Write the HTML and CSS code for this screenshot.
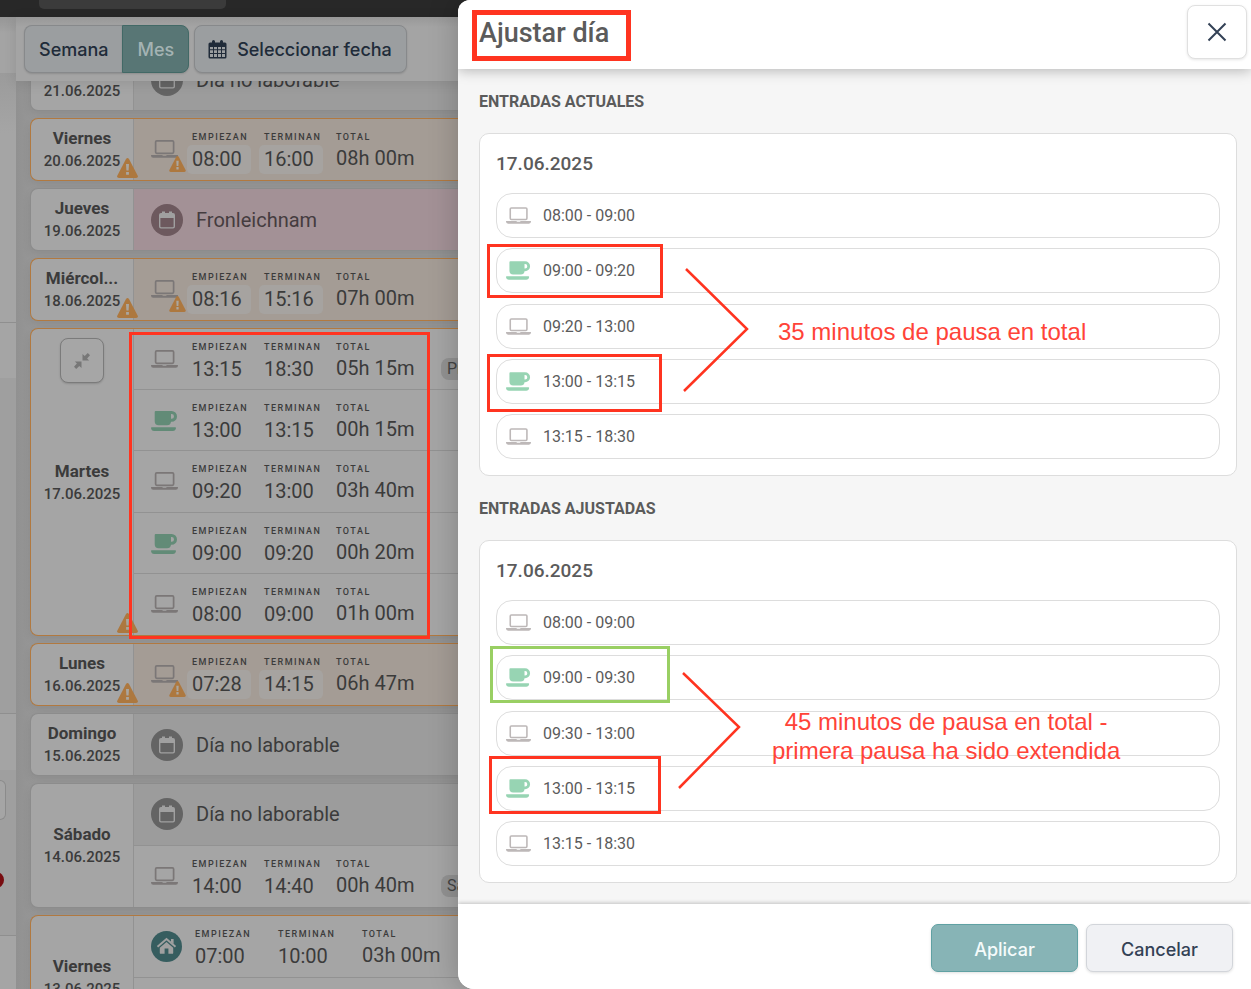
FILE: index.html
```html
<!DOCTYPE html>
<html lang="es">
<head>
<meta charset="utf-8">
<meta name="viewport" content="width=device-width, initial-scale=1">
<title>Ajustar día</title>
<link rel="stylesheet" href="styles.css">
</head>
<body>
<svg class="sprite" aria-hidden="true">
  <symbol id="laptop" viewBox="0 0 27 18"><rect x="4.6" y=".9" width="18" height="12.4" rx="1.2" fill="none" stroke="currentColor" stroke-width="1.7"/><path d="M0 14.9h11.2q.3.8 1 .8h2.6q.7 0 1-.8H27v.7q0 2.2-2.2 2.2H2.2Q0 17.800 0 15.600z" fill="currentColor"/></symbol>
  <symbol id="cup" viewBox="0 0 27 20"><path fill-rule="evenodd" d="M4.700 0H20.600a5.400 5.400 0 0 1 0 10.800H20a4 4 0 0 1-4 3.500H7.700a4 4 0 0 1-4-4V1q0-1 1-1zM20 3v4.800h.6a2.400 2.400 0 0 0 0-4.800zM.7 16.200h23.600q.8 0 .7.900-.4 2.900-3.200 2.900H3.200Q.4 20 0 17.100q-.1-.9.700-.9z" fill="currentColor"/></symbol>
  <symbol id="warn" viewBox="0 0 21 20"><path d="M9 1q1.500-2 3 0l8.600 16.400q1 2.300-1.500 2.500H1.900Q-.6 19.700.4 17.400z" fill="currentColor"/><path d="M9 6h3l-.4 6.500H9.400zM9.100 13.900h2.800v2.900H9.100z" class="warn-mark"/></symbol>
  <symbol id="day" viewBox="0 0 32 32"><circle cx="16" cy="16" r="16" fill="currentColor"/><path fill-rule="evenodd" d="M10 9h1V7.600h3V9h4V7.600h3V9h1q2 0 2 2v11.500q0 2-2 2H10q-2 0-2-2V11q0-2 2-2zm-.6 5v8.500q0 .7.700.7h11.800q.7 0 .7-.7V14z" class="day-mark"/></symbol>
  <symbol id="home" viewBox="0 0 31 31"><circle cx="15.500" cy="15.500" r="15.500" fill="currentColor"/><path d="M6.500 15.700l9-7.600 9 7.600" fill="none" class="home-line"/><path d="M20 8h2.600v5L20 11zM15.500 11l6.700 5.700v5.200q0 .9-.9.900h-3.900v-5.200h-3.800v5.200H9.700q-.9 0-.9-.9v-5.200z" class="day-mark"/></symbol>
</svg>

<div class="app">
  <header class="topbar"><div class="topbar-field"></div></header>
  <div class="workspace">
    <aside class="rail">
      <div class="rail-head"></div><div class="rail-a"></div><div class="rail-b"></div><div class="rail-c"></div><div class="rail-d"></div>
      <div class="rail-e"><i class="rail-field"></i><i class="rail-dot"></i></div>
      <div class="rail-f"></div>
    </aside>
    <main class="main">
      <div class="toolbar">
        <div class="segmented"><button type="button">Semana</button><button type="button" class="active">Mes</button></div>
        <button type="button" class="pick">
          <svg width="19" height="19" viewBox="0 0 19 19"><path fill-rule="evenodd" d="M2 2.500h2V1.500a1.500 1.500 0 0 1 3 0v1h5v-1a1.500 1.500 0 0 1 3 0v1h2q1.500 0 1.500 1.500v13q0 1.500-1.500 1.500H2Q.5 18.500.5 17V4Q.5 2.500 2 2.500zM2 7v2.200h3V7zm4 0v2.200h3V7zm4 0v2.200h3V7zm4 0v2.200h3V7zM2 10.200v2.800h3v-2.800zm4 0v2.800h3v-2.800zm4 0v2.800h3v-2.800zm4 0v2.800h3v-2.800zM2 14v3h3v-3zm4 0v3h3v-3zm4 0v3h3v-3zm4 0v3h3v-3z" fill="currentColor"/></svg>
          Seleccionar fecha</button>
      </div>
      <div class="scroller">
        <div class="days">
          <section class="day">
            <div class="date"><b>Sábado</b><span>21.06.2025</span></div>
            <div class="rows"><div class="row off"><svg class="round"><use href="#day"/></svg><span>Día no laborable</span></div></div>
          </section>
          <section class="day alert">
            <div class="date"><b>Viernes</b><span>20.06.2025</span><svg class="warn"><use href="#warn"/></svg></div>
            <div class="rows"><div class="row entry edit"><div class="kind"><svg class="laptop"><use href="#laptop"/></svg><svg class="mini"><use href="#warn"/></svg></div><div><small>EMPIEZAN</small><time>08:00</time></div><div><small>TERMINAN</small><time>16:00</time></div><div><small>TOTAL</small><span>08h 00m</span></div></div></div>
          </section>
          <section class="day">
            <div class="date"><b>Jueves</b><span>19.06.2025</span></div>
            <div class="rows"><div class="row off holiday"><svg class="round"><use href="#day"/></svg><span>Fronleichnam</span></div></div>
          </section>
          <section class="day alert">
            <div class="date"><b>Miércol...</b><span>18.06.2025</span><svg class="warn"><use href="#warn"/></svg></div>
            <div class="rows"><div class="row entry edit"><div class="kind"><svg class="laptop"><use href="#laptop"/></svg><svg class="mini"><use href="#warn"/></svg></div><div><small>EMPIEZAN</small><time>08:16</time></div><div><small>TERMINAN</small><time>15:16</time></div><div><small>TOTAL</small><span>07h 00m</span></div></div></div>
          </section>
          <section class="day alert">
            <div class="date"><button type="button" class="collapse" aria-label="Contraer"><svg width="16" height="16" viewBox="0 0 16 16"><path d="M8.500.9v6.600h6.600l-2-2L16 2.200 13.800 0l-3.100 3zM7.500 15.100V8.500H.9l2 2L0 13.800 2.200 16l3.100-3z" fill="currentColor"/></svg></button><b>Martes</b><span>17.06.2025</span><svg class="warn"><use href="#warn"/></svg></div>
            <div class="rows five">
              <div class="row entry"><div class="kind"><svg class="laptop"><use href="#laptop"/></svg></div><div><small>EMPIEZAN</small><time>13:15</time></div><div><small>TERMINAN</small><time>18:30</time></div><div><small>TOTAL</small><span>05h 15m</span></div><em>Proyecto</em></div>
              <div class="row entry"><div class="kind"><svg class="cup"><use href="#cup"/></svg></div><div><small>EMPIEZAN</small><time>13:00</time></div><div><small>TERMINAN</small><time>13:15</time></div><div><small>TOTAL</small><span>00h 15m</span></div></div>
              <div class="row entry"><div class="kind"><svg class="laptop"><use href="#laptop"/></svg></div><div><small>EMPIEZAN</small><time>09:20</time></div><div><small>TERMINAN</small><time>13:00</time></div><div><small>TOTAL</small><span>03h 40m</span></div></div>
              <div class="row entry"><div class="kind"><svg class="cup"><use href="#cup"/></svg></div><div><small>EMPIEZAN</small><time>09:00</time></div><div><small>TERMINAN</small><time>09:20</time></div><div><small>TOTAL</small><span>00h 20m</span></div></div>
              <div class="row entry"><div class="kind"><svg class="laptop"><use href="#laptop"/></svg></div><div><small>EMPIEZAN</small><time>08:00</time></div><div><small>TERMINAN</small><time>09:00</time></div><div><small>TOTAL</small><span>01h 00m</span></div></div>
            </div>
          </section>
          <section class="day alert">
            <div class="date"><b>Lunes</b><span>16.06.2025</span><svg class="warn"><use href="#warn"/></svg></div>
            <div class="rows"><div class="row entry edit"><div class="kind"><svg class="laptop"><use href="#laptop"/></svg><svg class="mini"><use href="#warn"/></svg></div><div><small>EMPIEZAN</small><time>07:28</time></div><div><small>TERMINAN</small><time>14:15</time></div><div><small>TOTAL</small><span>06h 47m</span></div></div></div>
          </section>
          <section class="day">
            <div class="date"><b>Domingo</b><span>15.06.2025</span></div>
            <div class="rows"><div class="row off"><svg class="round"><use href="#day"/></svg><span>Día no laborable</span></div></div>
          </section>
          <section class="day">
            <div class="date"><b>Sábado</b><span>14.06.2025</span></div>
            <div class="rows two">
              <div class="row off"><svg class="round"><use href="#day"/></svg><span>Día no laborable</span></div>
              <div class="row entry"><div class="kind"><svg class="laptop"><use href="#laptop"/></svg></div><div><small>EMPIEZAN</small><time>14:00</time></div><div><small>TERMINAN</small><time>14:40</time></div><div><small>TOTAL</small><span>00h 40m</span></div><em>Sábado</em></div>
            </div>
          </section>
          <section class="day alert">
            <div class="date"><b>Viernes</b><span>13.06.2025</span></div>
            <div class="rows two">
              <div class="row entry wide"><svg class="house"><use href="#home"/></svg><div><small>EMPIEZAN</small><time>07:00</time></div><div><small>TERMINAN</small><time>10:00</time></div><div><small>TOTAL</small><span>03h 00m</span></div></div>
              <div class="row"></div>
            </div>
          </section>
        </div>
      </div>
    </main>
  </div>
</div>

<div class="drawer" role="dialog" aria-labelledby="drawer-title">
  <header class="drawer-head">
    <h1 id="drawer-title">Ajustar día</h1>
    <button type="button" class="close" aria-label="Cerrar"><svg width="20" height="20" viewBox="0 0 20 20"><path d="M1.500 1.500l17 17M18.500 1.500l-17 17" stroke="currentColor" stroke-width="2"/></svg></button>
  </header>
  <div class="drawer-body">
    <h2>ENTRADAS ACTUALES</h2>
    <section class="panel">
      <h3>17.06.2025</h3>
      <ul>
        <li><svg class="laptop"><use href="#laptop"/></svg>08:00 - 09:00</li>
        <li><svg class="cup"><use href="#cup"/></svg>09:00 - 09:20</li>
        <li><svg class="laptop"><use href="#laptop"/></svg>09:20 - 13:00</li>
        <li><svg class="cup"><use href="#cup"/></svg>13:00 - 13:15</li>
        <li><svg class="laptop"><use href="#laptop"/></svg>13:15 - 18:30</li>
      </ul>
    </section>
    <h2>ENTRADAS AJUSTADAS</h2>
    <section class="panel">
      <h3>17.06.2025</h3>
      <ul>
        <li><svg class="laptop"><use href="#laptop"/></svg>08:00 - 09:00</li>
        <li><svg class="cup"><use href="#cup"/></svg>09:00 - 09:30</li>
        <li><svg class="laptop"><use href="#laptop"/></svg>09:30 - 13:00</li>
        <li><svg class="cup"><use href="#cup"/></svg>13:00 - 13:15</li>
        <li><svg class="laptop"><use href="#laptop"/></svg>13:15 - 18:30</li>
      </ul>
    </section>
  </div>
  <footer class="drawer-foot">
    <button type="button" class="apply">Aplicar</button>
    <button type="button" class="cancel">Cancelar</button>
  </footer>
</div>

<div class="notes">
  <svg class="marks" width="1251" height="989" viewBox="0 0 1251 989" fill="none" stroke="#ff3420" stroke-width="3" aria-hidden="true">
    <rect x="474.500" y="12.500" width="154" height="46" stroke-width="5"/>
    <rect x="130.500" y="333.500" width="298" height="304"/>
    <rect x="488.500" y="245.500" width="173" height="51"/>
    <rect x="488.500" y="355.500" width="172" height="55"/>
    <rect x="491.500" y="647.500" width="177" height="54" stroke="#99cf63"/>
    <rect x="490.500" y="757.500" width="169" height="55"/>
    <path d="M686 269l61 60-63 62M683 673l56 54-60 61" stroke-width="2.500"/>
  </svg>
  <p class="note first">35 minutos de pausa en total</p>
  <p class="note second">45 minutos de pausa en total -<br>primera pausa ha sido extendida</p>
</div>
</body>
</html>
```
FILE: styles.css
```css
* { box-sizing: border-box; }
body { margin: 0; height: 100vh; overflow: hidden; position: relative; font-family: Roboto, "Liberation Sans", sans-serif; color: #3b3b3b; background: #979797; }
button { font: 500 18px/24px Inter, "Liberation Sans", sans-serif; margin: 0; padding: 0; }
svg { flex: none; display: block; }
.sprite { position: absolute; width: 0; height: 0; }

.app { height: 100vh; display: flex; flex-direction: column; }
.topbar { flex: none; height: 17px; background: #282828; padding-left: 39px; }
.topbar-field { width: 187px; height: 9px; background: #3b3b3b; border-radius: 0 0 5px 5px; }
.workspace { flex: 1; min-height: 0; display: flex; }

.rail { width: 16px; flex: none; display: flex; flex-direction: column; background: #9f9f9f; }
.rail-head { height: 56px; background: linear-gradient(#969696, #a4a4a4 16px); }
.rail-a { height: 250px; background: linear-gradient(#9b9b9b, #a5a5a5 60px); border-bottom: 1px solid #8f8f8f; }
.rail-b { height: 55px; background: #a5a5a5; }
.rail-c { height: 336px; background: #9f9f9f; border-bottom: 1px solid #8f8f8f; }
.rail-d { height: 56px; background: #a4a4a4; }
.rail-e { height: 166px; border-bottom: 1px solid #8f8f8f; padding-top: 10px; overflow: hidden; }
.rail-field { display: block; width: 6px; height: 40px; border: 1px solid #8b8b8b; border-left: 0; border-radius: 0 6px 6px 0; background: #a5a5a5; }
.rail-dot { display: block; width: 16px; height: 16px; margin: 52px 0 0 -12px; border-radius: 50%; background: #780c10; }
.rail-f { flex: 1; background: #a5a5a5; }

.main { flex: 1; min-width: 0; display: flex; flex-direction: column; }
.toolbar { flex: none; height: 64px; padding: 8px; display: flex; gap: 5px; background: linear-gradient(#989898, #a4a4a4 10px); position: relative; z-index: 1; box-shadow: 0 2px 12px rgba(0,0,0,.1); }
.segmented { display: flex; }
.toolbar button { height: 48px; padding: 2px 14px 0; color: #202b39; background: #9b9ea0; border: 1px solid #87898b; border-radius: 8px; box-shadow: 0 1px 2px rgba(0,0,0,.14); }
.segmented button:first-child { border-radius: 8px 0 0 8px; border-right: 0; }
.toolbar .active { color: #a4b3b3; background: #587675; border-color: #426966; border-radius: 0 8px 8px 0; }
.toolbar .pick { display: flex; align-items: center; gap: 10px; padding: 2px 14px 0 13px; }
.pick svg { margin-bottom: 2px; }

.scroller { flex: 1; min-height: 0; overflow: hidden; padding-left: 14px; background: linear-gradient(90deg, #919191, #989898 20px); }
.days { margin-top: -33px; display: flex; flex-direction: column; gap: 7px; }
.day { display: flex; border: 1px solid #8c8c8c; border-right: 0; border-radius: 8px 0 0 8px; background: #a5a5a5; box-shadow: 0 4px 9px rgba(0,0,0,.08); }
.day.alert { border-color: #b17940; }
.date { width: 103px; flex: none; border-right: 1px solid #929292; position: relative; display: flex; flex-direction: column; align-items: center; justify-content: center; padding-top: 2px; }
.date b { font-size: 17px; line-height: 22px; font-weight: 700; }
.date span { font-size: 15px; line-height: 25px; font-weight: 500; }
.warn { position: absolute; right: -5px; bottom: 2px; width: 21px; height: 20px; color: #ad783f; z-index: 1; }
.warn-mark { fill: #aaa69f; }
.collapse { position: absolute; top: 9px; left: 29px; width: 44px; height: 45px; display: flex; align-items: center; justify-content: center; background: #a6a6a6; border: 1px solid #7b7b7b; border-radius: 8px; color: #777; box-shadow: 0 1px 2px rgba(0,0,0,.15); }
.rows { flex: 1; min-width: 0; min-height: 61px; display: grid; grid-auto-rows: 1fr; }
.rows.two { min-height: 123px; }
.rows.five { min-height: 306px; }
.row { padding-left: 17px; border-bottom: 1px solid #929292; overflow: hidden; }
.row:last-child { border-bottom: 0; }
.off { display: flex; align-items: center; gap: 13px; font-size: 20px; background: #9c9c9c; }
.off svg { width: 32px; height: 32px; color: #646464; }
.day-mark { fill: #a0a0a0; }
.holiday { background: #a39196; color: #453c3f; }
.holiday svg { color: #6d595e; }
.home-line { stroke: #a0a0a0; stroke-width: 2; }
.entry { display: grid; grid-template-columns: 41px 72px 72px 105px auto; padding-top: 12px; align-items: start; white-space: nowrap; }
.entry small { display: block; font-size: 9px; line-height: 12px; font-weight: 500; letter-spacing: 1.5px; }
.entry time, .entry div > span { display: block; width: 64px; margin: 2px 0 0 -5px; padding-left: 5px; font-size: 20px; line-height: 29px; border-radius: 5px; }
.entry div > span { margin-top: 1px; }
.edit { background: #a49c95; }
.edit time { background: #a6a3a0; }
.kind { position: relative; padding-top: 9px; }
.kind .laptop { width: 27px; height: 18px; color: #7b7777; }
.kind .cup { width: 27px; height: 20px; color: #628b77; }
.kind .mini { position: absolute; left: 18px; top: 25px; width: 17px; height: 16px; color: #ad783f; }
.entry em { justify-self: start; margin-top: 17px; font: 400 16px/22px Roboto, sans-serif; padding: 0 6px; background: #929292; border-radius: 8px; color: #444; }
.wide { grid-template-columns: 44px 83px 84px 105px; }
.house { width: 31px; height: 31px; margin-top: 3px; color: #365d5f; }

.drawer { position: absolute; top: 0; bottom: 0; left: 458px; right: 0; display: flex; flex-direction: column; background: #fff; border-radius: 12px 0 0 16px; overflow: hidden; box-shadow: 0 0 30px rgba(0,0,0,.22); z-index: 2; color: #5b5b5b; }
.drawer-head { flex: none; height: 69px; padding: 5px 4px 10px 21px; display: flex; justify-content: space-between; background: #fff; box-shadow: 0 2px 12px rgba(0,0,0,.26); z-index: 1; }
.drawer-head h1 { margin: 0; font-size: 27px; line-height: 56px; font-weight: 500; }
.close { width: 60px; height: 54px; display: flex; align-items: center; justify-content: center; background: #fff; border: 1px solid #e0e0e0; border-radius: 8px; color: #334155; box-shadow: 0 1px 3px rgba(0,0,0,.1); }
.drawer-body { flex: 1; min-height: 0; overflow: hidden; padding: 21px 14px 0 21px; background: #f6f6f6; }
.drawer-body h2 { margin: 0 0 19px; font-size: 16px; line-height: 24px; font-weight: 700; }
.panel { margin-bottom: 21px; padding: 16px; background: #fff; border: 1px solid #ddd; border-radius: 10px; }
.panel h3 { margin: 0 0 16px; font-size: 19px; line-height: 27px; font-weight: 500; }
.panel ul { margin: 0; padding: 0; min-height: 266px; list-style: none; display: flex; flex-direction: column; justify-content: space-between; }
.panel li { height: 45px; padding-left: 9px; display: flex; align-items: center; gap: 12px; border: 1px solid #ddd; border-radius: 16px; font-size: 16px; }
.panel .laptop { width: 25px; height: 17px; color: #bdb8b8; }
.panel .cup { width: 25px; height: 19px; color: #97d4b3; }
.drawer-foot { flex: none; height: 85px; padding: 20px 18px; display: flex; justify-content: flex-end; gap: 8px; background: #fff; box-shadow: 0 -1px 4px rgba(0,0,0,.22); z-index: 1; }
.drawer-foot button { width: 147px; height: 48px; padding-top: 3px; border-radius: 7px; box-shadow: 0 1px 3px rgba(0,0,0,.12); }
.apply { color: #f5fbfb; background: #87b4b6; border: 1px solid #60a1a3; }
.cancel { color: #334155; background: #f0f1f4; border: 1px solid #d2d5da; }

.notes { position: absolute; top: 0; left: 0; z-index: 3; pointer-events: none; }
.note { position: absolute; margin: 0; white-space: nowrap; text-align: center; color: #ff4338; font: 24px/29px "Liberation Sans", Arial, sans-serif; }
.first { left: 778px; top: 317px; }
.second { left: 772px; top: 707px; }
```
